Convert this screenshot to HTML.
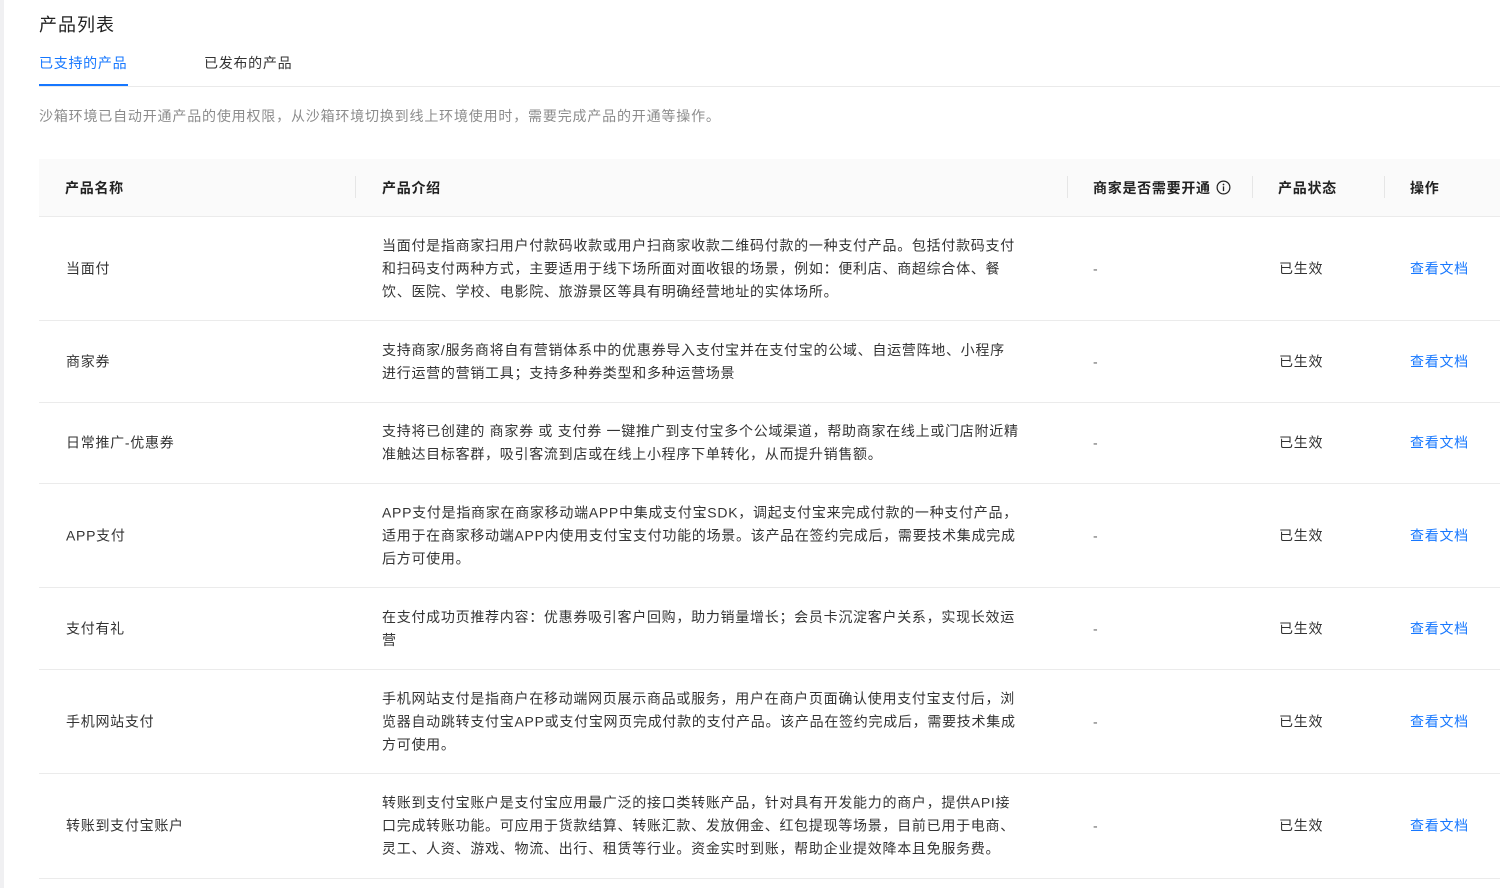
<!DOCTYPE html>
<html><head><meta charset="utf-8"><style>
*{margin:0;padding:0;box-sizing:border-box}
body{width:1500px;height:888px;overflow:hidden;background:#fff;font-family:"Liberation Sans","Noto Sans CJK SC",sans-serif;color:#333;position:relative;letter-spacing:0.72px}
.strip{position:absolute;left:0;top:0;width:4px;height:888px;background:#f0f0f2}
.title{position:absolute;left:39px;top:11px;font-size:18px;color:#222;letter-spacing:1px}
.tab{position:absolute;top:53px;font-size:14px}
.ul{position:absolute;left:39px;top:84px;width:89px;height:2px;background:#1677ff}
.hr{position:absolute;left:39px;top:86px;right:0;height:1px;background:#eaeaea}
.desc{position:absolute;left:39px;top:106px;font-size:14px;color:#8c8c8c;letter-spacing:0.82px}
.thead{position:absolute;left:39px;top:159px;width:1461px;height:58px;background:#fafafa;border-bottom:1px solid #ebebeb}
.th{position:absolute;top:19px;font-size:14px;font-weight:bold;color:#222}
.sep{position:absolute;top:17px;width:1px;height:22px;background:#e6e6e6}
.row{position:absolute;left:39px;width:1461px;border-bottom:1px solid #ebebeb}
.c{position:absolute;top:50%;transform:translateY(-50%);font-size:14px;color:#333;white-space:nowrap;line-height:23px}
.c1{left:27px}.c2{left:343px}.c3{left:1054px;color:#666}.c4{left:1240px}.c5{left:1371px;color:#1677ff}
</style></head><body>
<div class="strip"></div>
<div class="title">产品列表</div>
<div class="tab" style="left:39px;color:#1677ff">已支持的产品</div>
<div class="tab" style="left:204px;color:#333">已发布的产品</div>
<div class="hr"></div><div class="ul"></div>
<div class="desc">沙箱环境已自动开通产品的使用权限，从沙箱环境切换到线上环境使用时，需要完成产品的开通等操作。</div>
<div class="thead">
<div class="th" style="left:26px">产品名称</div>
<div class="sep" style="left:316px"></div>
<div class="th" style="left:343px">产品介绍</div>
<div class="sep" style="left:1028px"></div>
<div class="th" style="left:1054px">商家是否需要开通 <svg width="15" height="15" viewBox="0 0 16 16" style="vertical-align:-2px;margin-left:1px"><circle cx="8" cy="8" r="6.8" fill="none" stroke="#222" stroke-width="1.3"/><rect x="7.3" y="6.8" width="1.4" height="5" fill="#222"/><circle cx="8" cy="4.8" r="0.9" fill="#222"/></svg></div>
<div class="sep" style="left:1213px"></div>
<div class="th" style="left:1239px">产品状态</div>
<div class="sep" style="left:1345px"></div>
<div class="th" style="left:1371px">操作</div>
</div>

<div class="row" style="top:217px;height:104px"><div class="c c1">当面付</div><div class="c c2">当面付是指商家扫用户付款码收款或用户扫商家收款二维码付款的一种支付产品。包括付款码支付<br>和扫码支付两种方式，主要适用于线下场所面对面收银的场景，例如：便利店、商超综合体、餐<br>饮、医院、学校、电影院、旅游景区等具有明确经营地址的实体场所。</div><div class="c c3">-</div><div class="c c4">已生效</div><div class="c c5">查看文档</div></div>
<div class="row" style="top:321px;height:82px"><div class="c c1">商家券</div><div class="c c2">支持商家/服务商将自有营销体系中的优惠券导入支付宝并在支付宝的公域、自运营阵地、小程序<br>进行运营的营销工具；支持多种券类型和多种运营场景</div><div class="c c3">-</div><div class="c c4">已生效</div><div class="c c5">查看文档</div></div>
<div class="row" style="top:403px;height:81px"><div class="c c1">日常推广-优惠券</div><div class="c c2">支持将已创建的 商家券 或 支付券 一键推广到支付宝多个公域渠道，帮助商家在线上或门店附近精<br>准触达目标客群，吸引客流到店或在线上小程序下单转化，从而提升销售额。</div><div class="c c3">-</div><div class="c c4">已生效</div><div class="c c5">查看文档</div></div>
<div class="row" style="top:484px;height:104px"><div class="c c1">APP支付</div><div class="c c2">APP支付是指商家在商家移动端APP中集成支付宝SDK，调起支付宝来完成付款的一种支付产品，<br>适用于在商家移动端APP内使用支付宝支付功能的场景。该产品在签约完成后，需要技术集成完成<br>后方可使用。</div><div class="c c3">-</div><div class="c c4">已生效</div><div class="c c5">查看文档</div></div>
<div class="row" style="top:588px;height:82px"><div class="c c1">支付有礼</div><div class="c c2">在支付成功页推荐内容：优惠券吸引客户回购，助力销量增长；会员卡沉淀客户关系，实现长效运<br>营</div><div class="c c3">-</div><div class="c c4">已生效</div><div class="c c5">查看文档</div></div>
<div class="row" style="top:670px;height:104px"><div class="c c1">手机网站支付</div><div class="c c2">手机网站支付是指商户在移动端网页展示商品或服务，用户在商户页面确认使用支付宝支付后，浏<br>览器自动跳转支付宝APP或支付宝网页完成付款的支付产品。该产品在签约完成后，需要技术集成<br>方可使用。</div><div class="c c3">-</div><div class="c c4">已生效</div><div class="c c5">查看文档</div></div>
<div class="row" style="top:774px;height:105px"><div class="c c1">转账到支付宝账户</div><div class="c c2">转账到支付宝账户是支付宝应用最广泛的接口类转账产品，针对具有开发能力的商户，提供API接<br>口完成转账功能。可应用于货款结算、转账汇款、发放佣金、红包提现等场景，目前已用于电商、<br>灵工、人资、游戏、物流、出行、租赁等行业。资金实时到账，帮助企业提效降本且免服务费。</div><div class="c c3">-</div><div class="c c4">已生效</div><div class="c c5">查看文档</div></div>
</body></html>
